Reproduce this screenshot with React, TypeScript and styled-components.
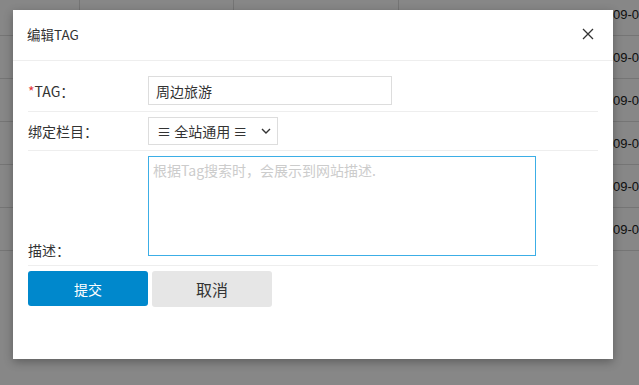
import styled, { createGlobalStyle } from 'styled-components';

const GlobalStyle = createGlobalStyle`
  html, body {
    margin: 0;
    padding: 0;
    background: #fff;
    font-family: 'Noto Sans CJK SC', 'Liberation Sans', sans-serif;
    font-size: 14px;
    color: #333;
  }
  * { box-sizing: border-box; }
`;

const Page = styled.div`
  position: relative;
  width: 639px;
  height: 385px;
  overflow: hidden;
`;

const Table = styled.div`
  display: flex;
  flex-direction: column;
  margin-top: -7px;
`;

const TableRow = styled.div`
  display: grid;
  grid-template-columns: 79px 154px 165px 1fr;
  height: 43px;
  border-bottom: 1px solid #ddd;
`;

const Cell = styled.div<{ $right?: boolean }>`
  display: flex;
  align-items: center;
  border-left: 1px solid #ddd;
  padding-left: 12px;
  font-family: 'Liberation Sans', 'Noto Sans CJK SC', sans-serif;
  font-size: 13px;
  color: #222;
  justify-content: ${(p) => (p.$right ? 'flex-end' : 'flex-start')};
  &:first-child { border-left: none; }
`;

const Overlay = styled.div`
  position: absolute;
  inset: 0;
  background: rgba(0, 0, 0, 0.47);
`;

const Dialog = styled.div`
  position: absolute;
  left: 13px;
  top: 10px;
  width: 600px;
  height: 349px;
  background: #fff;
  box-shadow: 0 3px 9px rgba(0, 0, 0, 0.3);
  display: flex;
  flex-direction: column;
`;

const Header = styled.div`
  display: flex;
  align-items: center;
  justify-content: space-between;
  height: 51px;
  padding: 0 19px 2px 14px;
  border-bottom: 1px solid #eee;
`;

const Title = styled.h3`
  margin: 0;
  font-size: 13.5px;
  font-weight: normal;
  color: #333;
`;

const CloseButton = styled.button`
  display: flex;
  border: none;
  background: none;
  padding: 0;
  cursor: pointer;
`;

const Form = styled.div`
  padding: 10px 15px 0;
`;

const Row = styled.div<{ $bottom?: boolean; $pad: string }>`
  display: flex;
  align-items: ${(p) => (p.$bottom ? 'flex-end' : 'center')};
  padding: ${(p) => p.$pad};
  border-bottom: 1px solid #eee;
`;

const Label = styled.label<{ $bottom?: boolean }>`
  width: 120px;
  flex-shrink: 0;
  font-size: 14px;
  color: #333;
  line-height: 20px;
  margin-bottom: ${(p) => (p.$bottom ? '-4px' : '0')};
`;

const Star = styled.span`
  color: #e4393c;
`;

const TextInput = styled.input`
  width: 244px;
  height: 29px;
  border: 1px solid #ddd;
  padding: 0 7px;
  font: inherit;
  font-size: 14px;
  color: #333;
  outline: none;
`;

const SelectBox = styled.div`
  display: flex;
  align-items: center;
  justify-content: space-between;
  width: 130px;
  height: 28px;
  border: 1px solid #ddd;
  padding: 0 6px 0 8px;
  font-size: 14px;
  color: #333;
`;

const TextArea = styled.textarea`
  width: 388px;
  height: 100px;
  border: 1px solid #3caee6;
  padding: 3px 4px;
  font: inherit;
  font-size: 14px;
  resize: none;
  outline: none;
  &::placeholder { color: #ccc; }
`;

const Actions = styled.div`
  display: flex;
  align-items: flex-start;
  gap: 4px;
  padding: 5px 15px 0;
`;

const Button = styled.button<{ $primary?: boolean }>`
  width: 120px;
  height: ${(p) => (p.$primary ? '35px' : '36px')};
  border: none;
  border-radius: 3px;
  font-family: inherit;
  font-size: ${(p) => (p.$primary ? '14px' : '16px')};
  background: ${(p) => (p.$primary ? '#0088cc' : '#e6e6e6')};
  color: ${(p) => (p.$primary ? '#fff' : '#333')};
  cursor: pointer;
`;

const rows = Array.from({ length: 6 });

export default function App() {
  return (
    <Page>
      <GlobalStyle />
      <Table>
        {rows.map((_, i) => (
          <TableRow key={i}>
            <Cell />
            <Cell />
            <Cell />
            <Cell $right>2018-09-0</Cell>
          </TableRow>
        ))}
      </Table>
      <Overlay />
      <Dialog>
        <Header>
          <Title>编辑TAG</Title>
          <CloseButton aria-label="关闭">
            <svg width="12" height="12" viewBox="0 0 12 12">
              <path d="M1 1L11 11M11 1L1 11" stroke="#333" strokeWidth="1.3" fill="none" />
            </svg>
          </CloseButton>
        </Header>
        <Form>
          <Row $pad="5px 0 6px">
            <Label>
              <Star>*</Star>TAG：
            </Label>
            <TextInput defaultValue="周边旅游" />
          </Row>
          <Row $pad="5px 0 5px">
            <Label>绑定栏目：</Label>
            <SelectBox>
              <span>≡ 全站通用 ≡</span>
              <svg width="10" height="6" viewBox="0 0 10 6">
                <path d="M1 1L5 5L9 1" stroke="#333" strokeWidth="1.4" fill="none" />
              </svg>
            </SelectBox>
          </Row>
          <Row $bottom $pad="5px 0 9px">
            <Label $bottom>描述：</Label>
            <TextArea placeholder="根据Tag搜索时，会展示到网站描述." />
          </Row>
        </Form>
        <Actions>
          <Button $primary>提交</Button>
          <Button>取消</Button>
        </Actions>
      </Dialog>
    </Page>
  );
}
